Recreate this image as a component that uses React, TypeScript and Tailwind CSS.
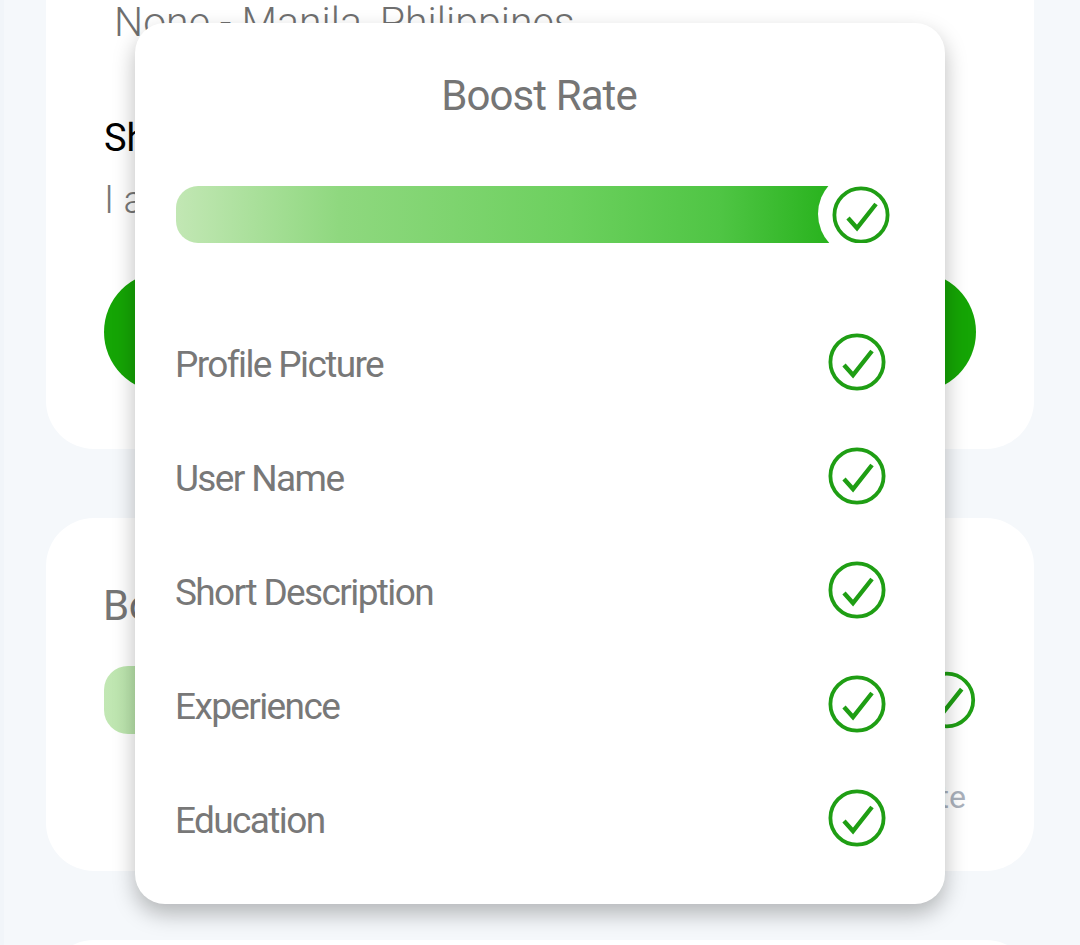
const rows = ["Profile Picture", "User Name", "Short Description", "Experience", "Education"];

function CheckCircle({ className }: { className?: string }) {
  return (
    <svg viewBox="0 0 58 58" fill="none" stroke="#1f9e14" className={className}>
      <circle cx="29" cy="29" r="26.6" strokeWidth="3.8" />
      <path d="M16 32 L25 42 L44 18" strokeWidth="4.4" />
    </svg>
  );
}

function Bar({ className }: { className?: string }) {
  return (
    <div
      className={`bg-[linear-gradient(90deg,#c2e7b4_0%,#8fd87f_24%,#6cd05e_58%,#4fc544_80%,#1fae14_100%)] ${className ?? ""}`}
    />
  );
}

export default function App() {
  return (
    <div className="relative h-[945px] w-[1080px] overflow-hidden border-l-[4px] border-[#f1f5f9] bg-[#f5f8fb] font-['Roboto',sans-serif]">
      <div className="flex flex-col pr-[46px] pl-[42px]">
        {/* profile card, scrolled off the top */}
        <div className="mt-[-100px] h-[549px] rounded-[48px] bg-white px-[58px] pt-[100px]">
          <p className="pl-[10px] text-[41px] leading-[44px] font-light text-[#6f6f6f]">None - Manila, Philippines</p>
          <p className="mt-[72px] text-[38px] leading-[44px] text-black">Short Description</p>
          <p className="mt-[18px] text-[38px] leading-[44px] font-light text-[#777]">I am a designer</p>
          <div className="mt-[50px] h-[120px] rounded-full bg-[#15a505]" />
        </div>

        {/* boost card behind the dialog */}
        <div className="mt-[69px] h-[353px] rounded-[48px] bg-white px-[58px] pt-[64px]">
          <p className="-ml-px text-[42px] leading-[48px] tracking-[-0.5px] text-[#757575]">Boost Rate</p>
          <div className="mt-[36px] flex items-center">
            <Bar className="h-[68px] w-[790px] rounded-[24px]" />
            <CheckCircle className="ml-[30px] size-[58px]" />
          </div>
          <p className="mt-[44px] pr-[10px] text-right text-[32px] leading-[38px] text-[#aab1bc]">Complete</p>
        </div>

        <div className="mt-[69px] h-[100px] rounded-[48px] bg-white" />
      </div>

      {/* dialog */}
      <div className="absolute top-[23px] left-[131px] flex h-[881px] w-[810px] flex-col rounded-[30px] bg-white px-[41px] pt-[48px] shadow-[0_10px_22px_rgba(0,0,0,0.27)]">
        <h2 className="-ml-[2px] text-center text-[42px] leading-[50px] tracking-[-0.9px] text-[#757575]">Boost Rate</h2>
        <div className="relative mt-[65px] h-[57px] overflow-hidden">
          <Bar className="h-[57px] w-[680px] rounded-l-[22px]" />
          <div className="absolute top-[-15px] left-[642px] size-[86px] rounded-full bg-white" />
          <CheckCircle className="absolute top-0 left-[656px] size-[58px]" />
        </div>
        <div className="mt-[90px] flex flex-col gap-[56px]">
          {rows.map((r) => (
            <div key={r} className="flex h-[58px] items-center justify-between pr-[18px]">
              <span className="-ml-px pt-[6px] text-[37px] leading-[44px] tracking-[-1.62px] text-[#787878]">{r}</span>
              <CheckCircle className="size-[58px]" />
            </div>
          ))}
        </div>
      </div>
    </div>
  );
}
